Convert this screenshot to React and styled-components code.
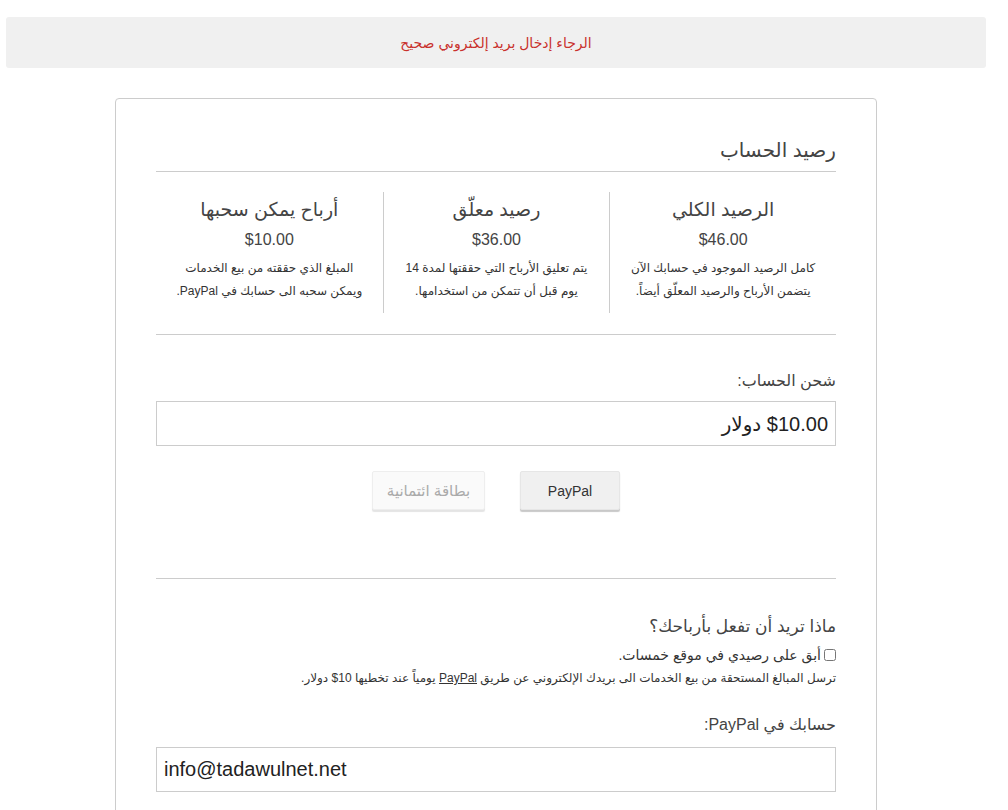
import React from 'react';
import styled, { createGlobalStyle } from 'styled-components';

const GlobalStyle = createGlobalStyle`
  body {
    margin: 0;
    background: #fff;
    font-family: "Liberation Sans", "DejaVu Sans", sans-serif;
    color: #444;
  }
`;

const Page = styled.div`
  width: 992px;
  padding-top: 17px;
  direction: rtl;
`;

const Alert = styled.div`
  margin: 0 6px;
  height: 51px;
  display: flex;
  align-items: center;
  justify-content: center;
  background: #f0f0f0;
  border-radius: 3px;
  color: #c9302c;
  font-size: 14px;
`;

const Card = styled.div`
  width: 762px;
  margin: 30px auto 0;
  border: 1px solid #ccc;
  border-radius: 4px;
  padding: 36px 40px 40px;
  box-sizing: border-box;
`;

const Title = styled.h2`
  margin: 0;
  padding-bottom: 5px;
  border-bottom: 1px solid #ccc;
  font-size: 20px;
  line-height: 31px;
  font-weight: normal;
  color: #444;
`;

const Columns = styled.div`
  display: grid;
  grid-template-columns: repeat(3, 1fr);
  margin-top: 20px;
`;

const Column = styled.div`
  text-align: center;
  padding: 4px 10px 10px;
  border-left: ${(p) => (p.$last ? 'none' : '1px solid #ccc')};
`;

const ColHead = styled.div`
  font-size: 19px;
  line-height: 28px;
  color: #444;
`;

const Amount = styled.div`
  margin-top: 5px;
  font-size: 16px;
  line-height: 22px;
  color: #444;
`;

const Desc = styled.div`
  margin-top: 6px;
  font-size: 12px;
  line-height: 23px;
  color: #333;
`;

const Rule = styled.hr`
  border: none;
  border-top: 1px solid #ccc;
  margin: ${(p) => p.$top}px 0 0;
`;

const Label = styled.div`
  margin-top: ${(p) => p.$top}px;
  font-size: ${(p) => p.$size || 16}px;
  line-height: ${(p) => (p.$size ? p.$size + 8 : 22)}px;
  color: #444;
`;

const Field = styled.div`
  margin-top: ${(p) => p.$top || 10}px;
  height: 45px;
  border: 1px solid #ccc;
  box-sizing: border-box;
  display: flex;
  align-items: center;
  padding: 0 7px;
  font-size: 20px;
  color: #222;
  direction: ${(p) => p.$dir || 'rtl'};
`;

const Buttons = styled.div`
  margin-top: 25px;
  display: flex;
  justify-content: center;
  gap: 35px;
`;

const Button = styled.button`
  height: 39px;
  width: ${(p) => p.$w}px;
  border: 1px solid ${(p) => (p.disabled ? '#eee' : '#e6e6e6')};
  border-radius: 2px;
  background: ${(p) => (p.disabled ? '#fafafa' : '#f0f0f0')};
  box-shadow: 0 2px 1px ${(p) => (p.disabled ? '#e4e4e4' : '#c8c8c8')};
  color: ${(p) => (p.disabled ? '#aaa' : '#333')};
  font-family: "Liberation Sans", "DejaVu Sans", sans-serif;
  font-size: ${(p) => p.$fs || 14}px;
  padding: 0;
`;

const CheckRow = styled.label`
  display: flex;
  align-items: center;
  gap: 3px;
  margin-top: 6px;
  font-size: 14px;
  line-height: 20px;
  color: #333;
  input {
    margin: 0;
    width: 12px;
    height: 12px;
  }
`;

const Note = styled.div`
  margin-top: 5px;
  font-size: 12px;
  line-height: 16px;
  color: #333;
  a {
    color: #333;
  }
`;

const balances = [
  {
    head: 'الرصيد الكلي',
    amount: '$46.00',
    lines: ['كامل الرصيد الموجود في حسابك الآن', 'يتضمن الأرباح والرصيد المعلّق أيضاً.'],
  },
  {
    head: 'رصيد معلّق',
    amount: '$36.00',
    lines: ['يتم تعليق الأرباح التي حققتها لمدة 14', 'يوم قبل أن تتمكن من استخدامها.'],
  },
  {
    head: 'أرباح يمكن سحبها',
    amount: '$10.00',
    lines: ['المبلغ الذي حققته من بيع الخدمات', 'ويمكن سحبه الى حسابك في PayPal.'],
  },
];

export default function App() {
  return (
    <Page>
      <GlobalStyle />
      <Alert>الرجاء إدخال بريد إلكتروني صحيح</Alert>
      <Card>
        <Title>رصيد الحساب</Title>
        <Columns>
          {balances.map((b, i) => (
            <Column key={b.head} $last={i === balances.length - 1}>
              <ColHead>{b.head}</ColHead>
              <Amount>{b.amount}</Amount>
              <Desc>
                {b.lines[0]}
                <br />
                {b.lines[1]}
              </Desc>
            </Column>
          ))}
        </Columns>
        <Rule $top={21} />
        <Label $top={35}>شحن الحساب:</Label>
        <Field $top={9}>$10.00 دولار</Field>
        <Buttons>
          <Button $w={100}>PayPal</Button>
          <Button $w={113} $fs={15} disabled>
            بطاقة ائتمانية
          </Button>
        </Buttons>
        <Rule $top={68} />
        <Label $top={35} $size={17}>
          ماذا تريد أن تفعل بأرباحك؟
        </Label>
        <CheckRow>
          <input type="checkbox" />
          أبق على رصيدي في موقع خمسات.
        </CheckRow>
        <Note>
          ترسل المبالغ المستحقة من بيع الخدمات الى بريدك الإلكتروني عن طريق <a href="#">PayPal</a> يومياً عند تخطيها 10$ دولار.
        </Note>
        <Label $top={28}>حسابك في PayPal:</Label>
        <Field $top={11} $dir="ltr">info@tadawulnet.net</Field>
      </Card>
    </Page>
  );
}
